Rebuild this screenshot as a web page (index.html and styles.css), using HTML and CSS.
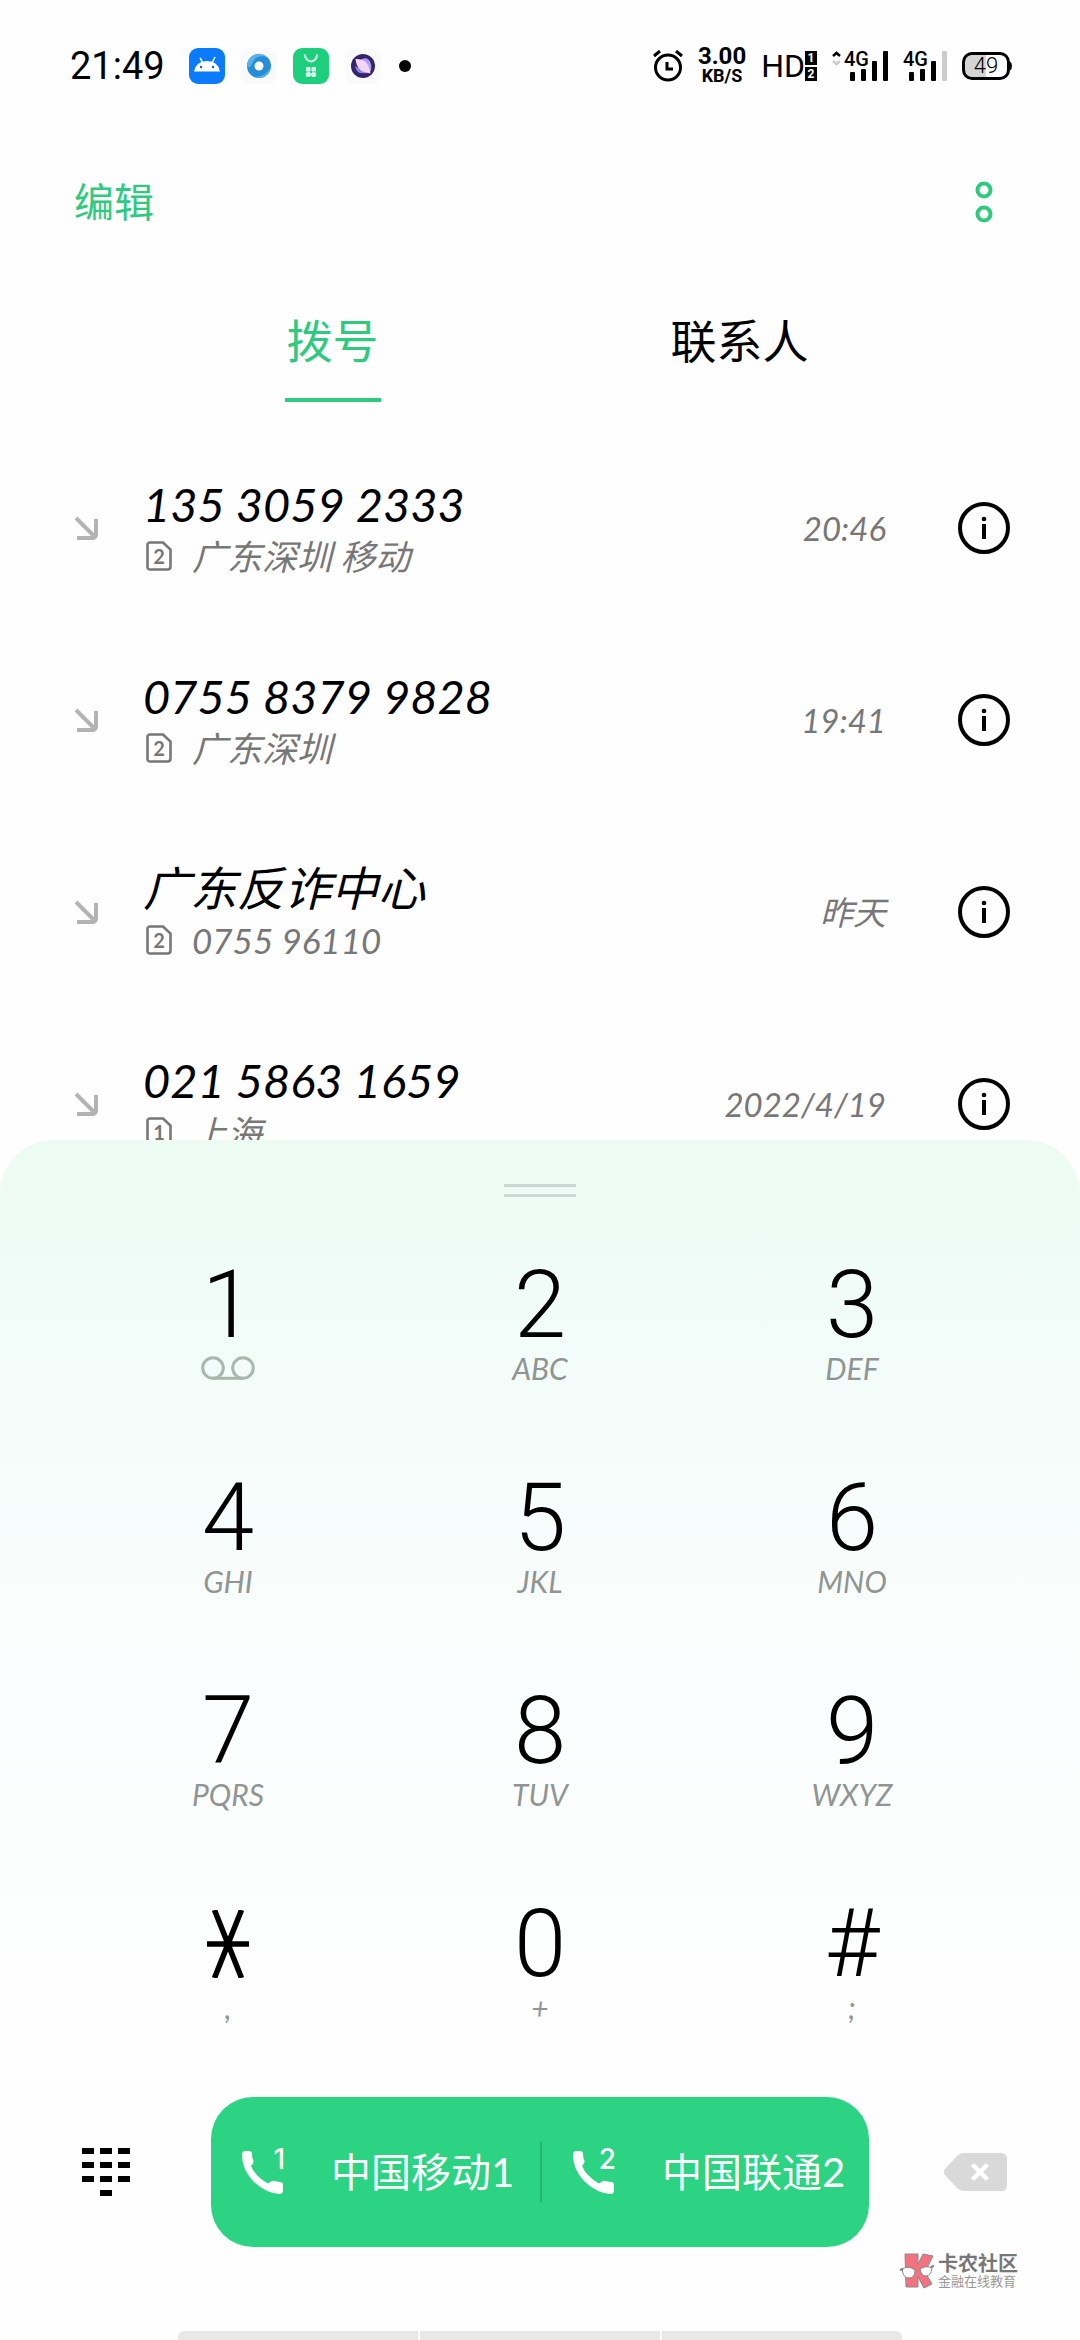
FILE: index.html
```html
<!DOCTYPE html>
<html lang="zh-CN">
<head>
<meta charset="utf-8">
<meta name="viewport" content="width=device-width, initial-scale=1">
<title>拨号</title>
<link rel="stylesheet" href="styles.css">
</head>
<body>
<svg class="defs" aria-hidden="true">
  <symbol id="incoming" viewBox="0 0 24 24"><path d="M2 2l19 19M22 3v15q0 4-4 4H3" fill="none" stroke="currentColor" stroke-width="4"/></symbol>
  <symbol id="info" viewBox="0 0 52 52"><circle cx="26" cy="26" r="24" fill="none" stroke="currentColor" stroke-width="4"/><circle cx="26" cy="17" r="2.3" fill="currentColor"/><path d="M26 22v15" stroke="currentColor" stroke-width="4"/></symbol>
  <symbol id="sim" viewBox="0 0 26 30"><path d="M4 1.500h13l7.500 7v17q0 3-3 3H4q-2.500 0-2.500-3V4q0-2.500 2.500-2.500z" fill="none" stroke="currentColor" stroke-width="2.600"/></symbol>
  <symbol id="phone" viewBox="0 0 42 43"><path d="M1 4Q1 0 4 0h4q3 0 3 3 0 4 1.500 7 .5 2-2.500 5 4 10 17 17.500l3-2q1.500-1 4-.5 3 .8 6 1 2 .3 2 3v5q0 4-3 4Q25 42.500 12 30 1 18 1 4z" fill="currentColor"/></symbol>
</svg>
<div class="app">
  <div class="status">
    <div class="status-left">
      <time class="clock">21:49</time>
      <svg class="app-icon" viewBox="0 0 36 36"><rect width="36" height="36" rx="9" fill="#0a7bfb"/><path d="M5 23.500Q7 13 18 13t13 10.500z" fill="#fff"/><path d="M11 10l3 5M26 9l-3 6" stroke="#fff" stroke-width="1.500"/><circle cx="12" cy="19" r="1.200" fill="#0a5fd0"/><circle cx="24" cy="19" r="1.200" fill="#0a5fd0"/></svg>
      <svg class="app-icon" viewBox="0 0 36 36"><rect width="36" height="36" rx="9" fill="#fafafa"/><circle cx="18" cy="18" r="12" fill="#258cd8"/><path d="M6 18a12 12 0 0 1 20-9q-12-3-15 7-2 5-5 2z" fill="#58b4e8"/><path d="M30 18a12 12 0 0 1-16 11q13-1 16-11z" fill="#58b4e8"/><circle cx="18" cy="18" r="4.500" fill="#fff"/></svg>
      <svg class="app-icon" viewBox="0 0 36 36"><rect width="36" height="36" rx="9" fill="#1dce7d"/><path d="M12 6.500a6 7 0 0 0 12 0" fill="none" stroke="#dffbee" stroke-width="2"/><g fill="#dffbee"><rect x="13" y="19" width="4.500" height="4.500" rx="1"/><rect x="18.500" y="19" width="4.500" height="4.500" rx="1"/><circle cx="15.300" cy="26.500" r="2.600"/><circle cx="20.700" cy="26.500" r="2.600"/></g></svg>
      <svg class="app-icon" viewBox="0 0 36 36"><rect width="36" height="36" rx="9" fill="#fafafa"/><circle cx="18" cy="18" r="12" fill="#34246e"/><path d="M15 12q8-5 11 4 1 5-1 8z" fill="#a9a0f0"/><path d="M10 18q1 9 12 7z" fill="#8d80e6"/><path d="M10.500 11q11-1 14 10l1 4.500-5-1q-9-2-10-13.500z" fill="#f6d6f8"/></svg>
      <svg class="dot" viewBox="0 0 12 12"><circle cx="6" cy="6" r="6"/></svg>
    </div>
    <div class="status-right">
      <svg class="alarm" viewBox="0 0 30 32"><g fill="none" stroke="#000" stroke-width="3"><circle cx="15" cy="17.500" r="12.500"/><path d="M1 6l6-5M29 6l-6-5M14 12v7h6"/></g></svg>
      <div class="speed"><span>3.00</span><span class="unit">KB/S</span></div>
      <div class="hd"><span>HD</span><svg class="hd-box" viewBox="0 0 12 30"><rect width="12" height="14"/><rect y="16" width="12" height="14"/><g fill="#fff" font-size="12" font-weight="700" text-anchor="middle"><text x="6" y="11">1</text><text x="6" y="27">2</text></g></svg></div>
      <svg class="signal" viewBox="0 -4 56 40"><path d="M1 6l3.500-3L8 6" fill="none" stroke="#000" stroke-width="2.500"/><path d="M1 11l3.500 3L8 11" fill="none" stroke="#ccc" stroke-width="2.500"/><text x="12" y="16" font-size="20" font-weight="500">4G</text><rect x="18" y="22" width="5" height="9" rx="1"/><rect x="29" y="19" width="5" height="12" rx="1"/><rect x="40" y="11" width="5" height="20" rx="1"/><rect x="51" y="1" width="5" height="30" rx="1"/></svg>
      <svg class="signal-2" viewBox="0 -4 44 40"><text x="0" y="16" font-size="20" font-weight="500">4G</text><rect x="6" y="22" width="5" height="9" rx="1"/><rect x="17" y="19" width="5" height="12" rx="1"/><rect x="28" y="11" width="5" height="20" rx="1"/><rect x="39" y="1" width="5" height="30" rx="1" fill="#ccc"/></svg>
      <svg class="battery" viewBox="0 0 50 28"><path d="M24 2H9Q2 2 2 9v10q0 7 7 7h15z" fill="#d4d4d4"/><rect x="1.500" y="1.500" width="45" height="25" rx="8.500" fill="none" stroke="#000" stroke-width="3"/><path d="M48 9.500q2 1 2 4.500t-2 4.500z"/><text x="24" y="21" font-size="22" font-weight="300" text-anchor="middle">49</text></svg>
    </div>
  </div>

  <header class="toolbar">
    <button class="edit" type="button">编辑</button>
    <button class="more" type="button" aria-label="更多"><svg viewBox="0 0 18 42"><g fill="none" stroke="currentColor" stroke-width="4"><circle cx="9" cy="9" r="6.500"/><circle cx="9" cy="33" r="6.500"/></g></svg></button>
  </header>

  <nav class="tabs">
    <a class="tab active" href="#dial" aria-current="page">拨号</a>
    <a class="tab" href="#contacts">联系人</a>
  </nav>

  <ul class="calls">
    <li class="call">
      <svg class="dir"><use href="#incoming"/></svg>
      <div class="who"><div class="name">135 3059 2333</div><div class="place"><span class="sim"><svg><use href="#sim"/></svg>2</span>广东深圳 移动</div></div>
      <time class="when">20:46</time>
      <button class="info" type="button" aria-label="详情"><svg><use href="#info"/></svg></button>
    </li>
    <li class="call">
      <svg class="dir"><use href="#incoming"/></svg>
      <div class="who"><div class="name">0755 8379 9828</div><div class="place"><span class="sim"><svg><use href="#sim"/></svg>2</span>广东深圳</div></div>
      <time class="when">19:41</time>
      <button class="info" type="button" aria-label="详情"><svg><use href="#info"/></svg></button>
    </li>
    <li class="call">
      <svg class="dir"><use href="#incoming"/></svg>
      <div class="who"><div class="name">广东反诈中心</div><div class="place"><span class="sim"><svg><use href="#sim"/></svg>2</span>0755 96110</div></div>
      <time class="when">昨天</time>
      <button class="info" type="button" aria-label="详情"><svg><use href="#info"/></svg></button>
    </li>
    <li class="call">
      <svg class="dir"><use href="#incoming"/></svg>
      <div class="who"><div class="name">021 5863 1659</div><div class="place"><span class="sim"><svg><use href="#sim"/></svg>1</span>上海</div></div>
      <time class="when">2022/4/19</time>
      <button class="info" type="button" aria-label="详情"><svg><use href="#info"/></svg></button>
    </li>
  </ul>

  <section class="sheet" id="dial">
    <div class="grip"></div>
    <div class="keypad">
      <button class="key" type="button"><span class="digit">1</span><span class="letters"><svg class="voicemail" viewBox="0 0 54 24"><g fill="none" stroke="currentColor" stroke-width="3"><circle cx="12" cy="12" r="10.300"/><circle cx="42" cy="12" r="10.300"/><path d="M12 22.300h30"/></g></svg></span></button>
      <button class="key" type="button"><span class="digit">2</span><span class="letters">ABC</span></button>
      <button class="key" type="button"><span class="digit">3</span><span class="letters">DEF</span></button>
      <button class="key" type="button"><span class="digit">4</span><span class="letters">GHI</span></button>
      <button class="key" type="button"><span class="digit">5</span><span class="letters">JKL</span></button>
      <button class="key" type="button"><span class="digit">6</span><span class="letters">MNO</span></button>
      <button class="key" type="button"><span class="digit">7</span><span class="letters">PQRS</span></button>
      <button class="key" type="button"><span class="digit">8</span><span class="letters">TUV</span></button>
      <button class="key" type="button"><span class="digit">9</span><span class="letters">WXYZ</span></button>
      <button class="key" type="button" aria-label="星号"><span class="digit"><svg class="star" viewBox="0 0 42 68"><path d="M7.500 0l27 68M34.500 0l-27 68M0 34h42" stroke="currentColor" stroke-width="5.500"/></svg></span><span class="letters">,</span></button>
      <button class="key" type="button"><span class="digit">0</span><span class="letters">+</span></button>
      <button class="key" type="button"><span class="digit">#</span><span class="letters">;</span></button>
    </div>
    <div class="actions">
      <button class="icon-button" type="button" aria-label="收起键盘"><svg class="pad-icon" viewBox="0 0 48 48"><path d="M0 3h48M0 17h48M0 31h48" stroke="currentColor" stroke-width="6" stroke-dasharray="12 6"/><path d="M18 45h12" stroke="currentColor" stroke-width="6"/></svg></button>
      <div class="dialbar">
        <button class="dial" type="button"><span class="handset"><svg><use href="#phone"/></svg><sup>1</sup></span>中国移动1</button>
        <button class="dial" type="button"><span class="handset"><svg><use href="#phone"/></svg><sup>2</sup></span>中国联通2</button>
      </div>
      <button class="icon-button" type="button" aria-label="删除"><svg class="erase" viewBox="0 0 64 38"><path d="M14 3q3-3 6-3h38q6 0 6 6v26q0 6-6 6H20q-3 0-6-3L1.500 21.500Q0 19 1.500 16.500z" fill="#d9d9d9"/><path d="M29.500 11.500l15 15M44.500 11.500l-15 15" stroke="#fff" stroke-width="4.500"/></svg></button>
    </div>
    <div class="edge-bar"><span></span><span></span><span></span></div>
    <div class="watermark">
      <svg viewBox="0 0 34 36"><path d="M5 1h13v10l5-10 10 2-8 16 7 12-8 4-6-11v10H6z" fill="#f2727f" stroke="#8a8a8a"/><path d="M2 16q7-4 13 1 0 8-6 8-6 0-7-9zM20 16q6-4 12-1-1 8-6 8-5 0-6-7z" fill="#fff" stroke="#8a8a8a"/><path d="M0 17l3-1M31 14l3-1" stroke="#777" stroke-width="2"/></svg>
      <div><strong>卡农社区</strong><small>金融在线教育</small></div>
    </div>
  </section>
</div>
</body>
</html>
```
FILE: styles.css
```css
* { box-sizing: border-box; }

body {
  margin: 0;
  background: #fefefe;
  color: #000;
  font-family: Lato, "Noto Sans CJK SC", sans-serif;
}

button {
  padding: 0;
  border: 0;
  background: none;
  color: inherit;
  font: inherit;
}

svg { display: block; }
.defs { display: none; }

.app {
  display: flex;
  flex-direction: column;
  height: 100vh;
  overflow: hidden;
}

/* status bar */
.status {
  display: flex;
  justify-content: space-between;
  align-items: center;
  height: 132px;
  padding: 0 68px 0 70px;
  font-family: Roboto, sans-serif;
}
.status-left, .status-right { display: flex; align-items: center; }
.status-left { gap: 16px; }
.clock { width: 103px; font-size: 38px; line-height: 40px; }
.app-icon { width: 36px; height: 36px; }
.dot { width: 12px; height: 12px; margin-left: 2px; }
.status-right { gap: 15px; }
.alarm { width: 30px; height: 32px; }
.speed {
  display: flex;
  flex-direction: column;
  align-items: center;
  font-size: 24px;
  font-weight: 700;
  line-height: 19px;
}
.speed .unit { font-size: 18px; }
.hd { display: flex; align-items: center; font-size: 32px; line-height: 32px; }
.hd-box { width: 12px; height: 30px; }
.signal { width: 56px; height: 40px; }
.signal-2 { width: 44px; height: 40px; }
.battery { width: 50px; height: 28px; }

/* toolbar and tabs */
.toolbar {
  display: flex;
  justify-content: space-between;
  align-items: center;
  height: 140px;
  padding: 0 87px 0 74px;
  color: #2fca80;
}
.edit { font-size: 40px; line-height: 48px; }
.more svg { width: 18px; height: 42px; }

.tabs {
  display: grid;
  grid-template-columns: 1fr 1fr;
  height: 160px;
  padding: 36px 137px 0 129px;
}
.tab {
  display: flex;
  flex-direction: column;
  align-items: center;
  gap: 24px;
  color: #000;
  font-size: 46px;
  line-height: 66px;
  text-decoration: none;
}
.tab.active { color: #2fca80; }
.tab.active::after { content: ""; width: 96px; height: 4px; background: #2fca80; }

/* call log */
.calls {
  flex: 1;
  min-height: 0;
  margin: 0;
  padding: 0;
  overflow: hidden;
  list-style: none;
}
.call {
  display: flex;
  align-items: center;
  height: 192px;
  padding: 0 70px 0 74px;
}
.dir { width: 24px; height: 24px; margin-right: 45px; color: #b3b3b3; }
.who { flex: 1; }
.name { font-size: 47px; font-style: italic; line-height: 56px; }
.place {
  display: flex;
  align-items: center;
  gap: 20px;
  padding-left: 3px;
  color: #777;
  font-size: 35px;
  font-style: italic;
  line-height: 48px;
}
.sim {
  position: relative;
  width: 26px;
  font-size: 20px;
  font-style: normal;
  font-weight: 700;
  line-height: 30px;
  text-align: center;
}
.sim svg { position: absolute; inset: 0; width: 26px; height: 30px; }
.when { color: #777; font-size: 33px; font-style: italic; line-height: 48px; }
.info { margin-left: 72px; }
.info svg { width: 52px; height: 52px; }

/* dial sheet */
.sheet {
  position: relative;
  padding-top: 44px;
  border-radius: 54px 54px 0 0;
  background: linear-gradient(#ecfbf4, #f8fdfc 35%, #fefefe 75%);
}
.grip {
  width: 72px;
  height: 13px;
  margin: 0 auto 33px;
  border: solid #ccd8d3;
  border-width: 3px 0;
}

.keypad {
  display: grid;
  grid-template-columns: repeat(3, 1fr);
  padding: 0 72px;
}
.key {
  display: flex;
  flex-direction: column;
  align-items: center;
  height: 213px;
  padding-top: 31px;
}
.digit {
  display: grid;
  place-items: center;
  height: 88px;
  font-family: Roboto, sans-serif;
  font-size: 94px;
  font-weight: 300;
  line-height: 88px;
}
.star { width: 42px; height: 68px; }
.letters {
  display: grid;
  place-items: center;
  height: 38px;
  color: #8f9592;
  font-size: 30px;
  font-style: italic;
  line-height: 38px;
}
.voicemail { width: 54px; height: 24px; color: #a9b6b0; }

.actions {
  display: grid;
  grid-template-columns: 1fr minmax(0, 658px) 1fr;
  align-items: center;
  padding-top: 15px;
}
.icon-button { justify-self: center; }
.pad-icon { width: 48px; height: 48px; }
.erase { width: 64px; height: 38px; }

.dialbar {
  display: grid;
  grid-template-columns: 1fr 1fr;
  align-items: center;
  height: 150px;
  border-radius: 42px;
  background: #2bd383;
  color: #fff;
}
.dial {
  display: flex;
  align-items: center;
  gap: 48px;
  height: 62px;
  padding-left: 30px;
  font-size: 40px;
  line-height: 48px;
  white-space: nowrap;
}
.dial + .dial { border-left: 2px solid #1fb86f; }
.handset { position: relative; }
.handset svg { width: 42px; height: 43px; }
.handset sup {
  position: absolute;
  top: -6px;
  right: -2px;
  font-family: Inter, sans-serif;
  font-size: 28px;
  font-weight: 500;
  line-height: 28px;
}

.edge-bar { display: flex; justify-content: center; gap: 2px; padding-top: 84px; }
.edge-bar span { width: 240px; height: 9px; background: #e8e8e8; }
.edge-bar span:first-child { border-top-left-radius: 6px; }
.edge-bar span:last-child { border-top-right-radius: 6px; }

.watermark {
  position: absolute;
  right: 62px;
  bottom: 51px;
  display: flex;
  align-items: center;
  gap: 4px;
  color: #777;
  font-family: "Noto Sans CJK SC", sans-serif;
}
.watermark svg { width: 34px; height: 36px; }
.watermark div { display: flex; flex-direction: column; }
.watermark strong { font-size: 20px; line-height: 20px; }
.watermark small { color: #999; font-size: 13px; line-height: 16px; }
```
